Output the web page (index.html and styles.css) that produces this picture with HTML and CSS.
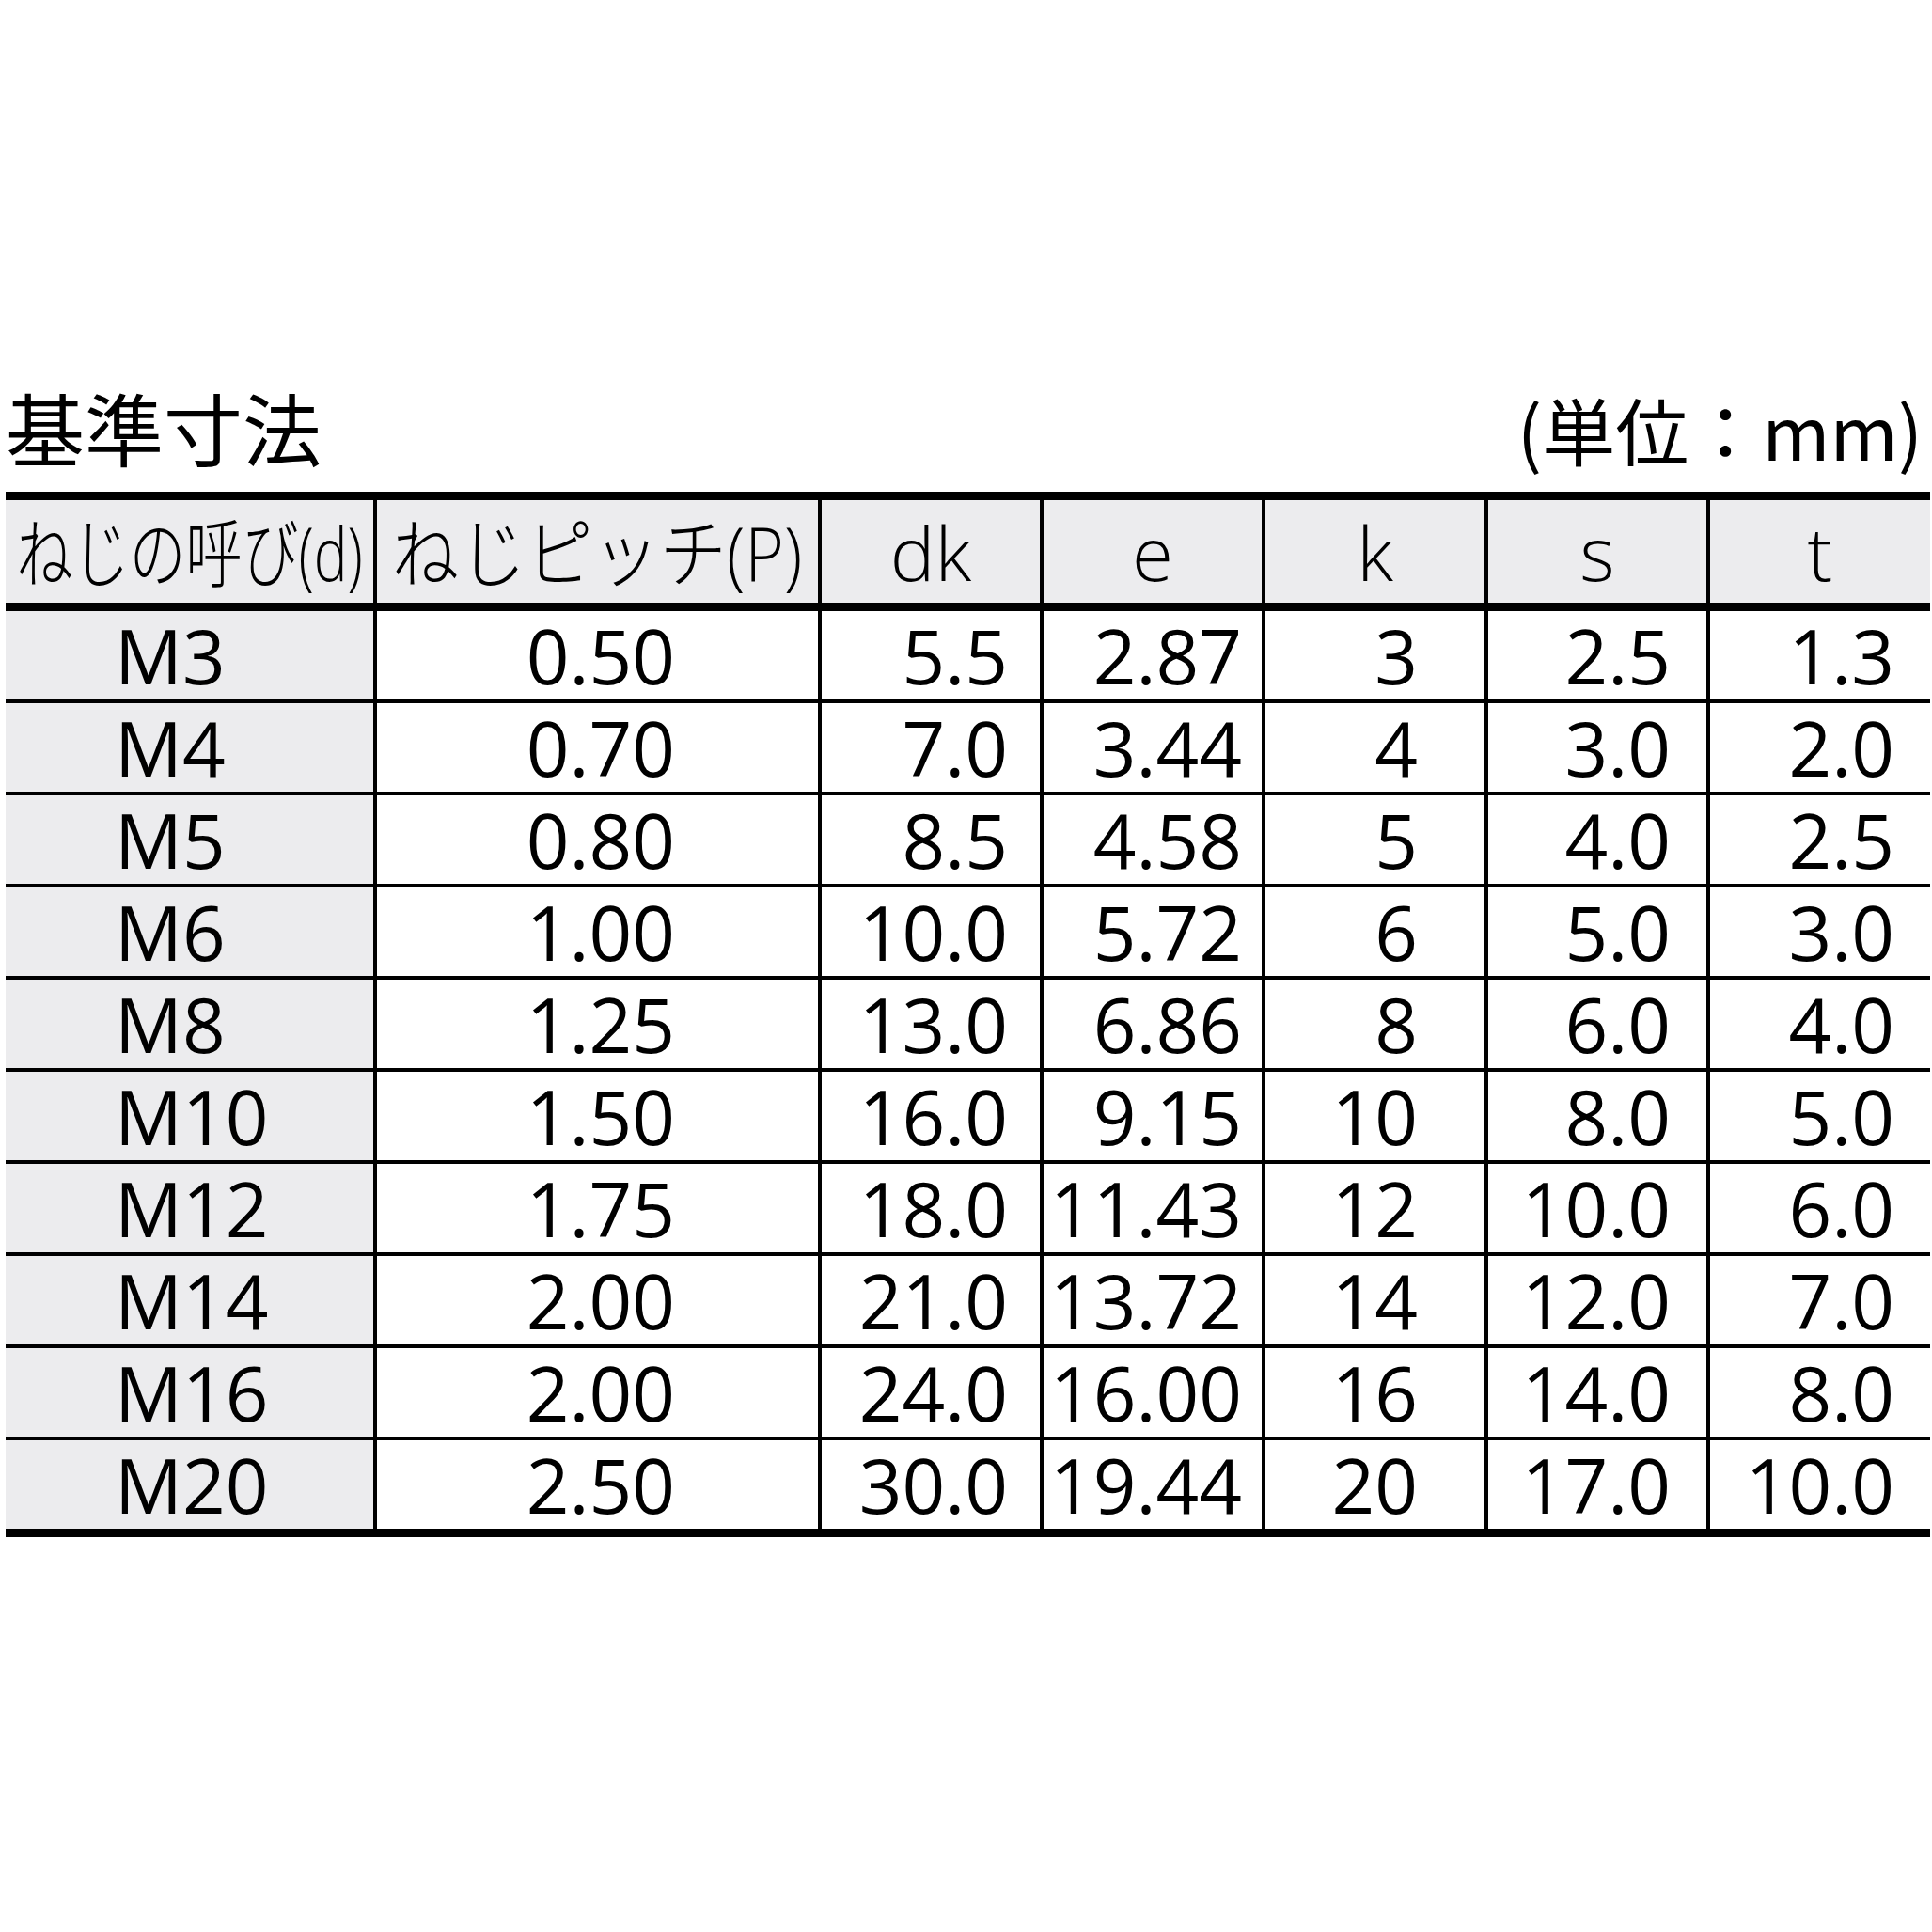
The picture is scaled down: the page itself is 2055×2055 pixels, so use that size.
FILE: index.html
```html
<!DOCTYPE html>
<html lang="ja">
<head>
<meta charset="utf-8">
<title>基準寸法</title>
<link rel="stylesheet" href="styles.css">
</head>
<body>
<div class="page">
  <div class="title-row">
    <h1 class="title">基準寸法</h1>
    <div class="unit">(単位：mm)</div>
  </div>
  <div class="table">
    <div class="row head">
      <div class="cell c1"><span class="squeeze s1">ねじの呼び(d)</span></div>
      <div class="cell c2"><span class="squeeze s2">ねじピッチ(P)</span></div>
      <div class="cell c3">dk</div>
      <div class="cell c4">e</div>
      <div class="cell c5">k</div>
      <div class="cell c6">s</div>
      <div class="cell c7">t</div>
    </div>
    <div class="row"><div class="cell c1">M3</div><div class="cell c2">0.50</div><div class="cell c3">5.5</div><div class="cell c4">2.87</div><div class="cell c5">3</div><div class="cell c6">2.5</div><div class="cell c7">1.3</div></div>
    <div class="row"><div class="cell c1">M4</div><div class="cell c2">0.70</div><div class="cell c3">7.0</div><div class="cell c4">3.44</div><div class="cell c5">4</div><div class="cell c6">3.0</div><div class="cell c7">2.0</div></div>
    <div class="row"><div class="cell c1">M5</div><div class="cell c2">0.80</div><div class="cell c3">8.5</div><div class="cell c4">4.58</div><div class="cell c5">5</div><div class="cell c6">4.0</div><div class="cell c7">2.5</div></div>
    <div class="row"><div class="cell c1">M6</div><div class="cell c2">1.00</div><div class="cell c3">10.0</div><div class="cell c4">5.72</div><div class="cell c5">6</div><div class="cell c6">5.0</div><div class="cell c7">3.0</div></div>
    <div class="row"><div class="cell c1">M8</div><div class="cell c2">1.25</div><div class="cell c3">13.0</div><div class="cell c4">6.86</div><div class="cell c5">8</div><div class="cell c6">6.0</div><div class="cell c7">4.0</div></div>
    <div class="row"><div class="cell c1">M10</div><div class="cell c2">1.50</div><div class="cell c3">16.0</div><div class="cell c4">9.15</div><div class="cell c5">10</div><div class="cell c6">8.0</div><div class="cell c7">5.0</div></div>
    <div class="row"><div class="cell c1">M12</div><div class="cell c2">1.75</div><div class="cell c3">18.0</div><div class="cell c4">11.43</div><div class="cell c5">12</div><div class="cell c6">10.0</div><div class="cell c7">6.0</div></div>
    <div class="row"><div class="cell c1">M14</div><div class="cell c2">2.00</div><div class="cell c3">21.0</div><div class="cell c4">13.72</div><div class="cell c5">14</div><div class="cell c6">12.0</div><div class="cell c7">7.0</div></div>
    <div class="row"><div class="cell c1">M16</div><div class="cell c2">2.00</div><div class="cell c3">24.0</div><div class="cell c4">16.00</div><div class="cell c5">16</div><div class="cell c6">14.0</div><div class="cell c7">8.0</div></div>
    <div class="row last"><div class="cell c1">M20</div><div class="cell c2">2.50</div><div class="cell c3">30.0</div><div class="cell c4">19.44</div><div class="cell c5">20</div><div class="cell c6">17.0</div><div class="cell c7">10.0</div></div>
  </div>
</div>
</body>
</html>
```

FILE: styles.css
```css
html, body {
  margin: 0;
  padding: 0;
  background: #ffffff;
}

body {
  width: 2055px;
  height: 2055px;
  color: #000000;
  font-family: "Open Sans", "Noto Sans CJK JP", sans-serif;
}

.page {
  padding: 412px 2px 0 6px;
}

.title-row {
  display: flex;
  justify-content: space-between;
  align-items: baseline;
  height: 84px;
  margin-bottom: 27px;
}

.title {
  margin: 0;
  font-family: "Noto Sans CJK JP", sans-serif;
  font-weight: 400;
  font-size: 84px;
  line-height: 1;
}

.unit {
  font-family: "Noto Sans CJK JP", sans-serif;
  font-weight: 400;
  font-size: 78px;
  line-height: 1;
  margin-right: 8px;
}

.table {
  width: 2047px;
}

.row {
  display: grid;
  grid-template-columns: 395px 473px 236px 236px 237px 236px 234px;
  height: 98px;
  box-sizing: border-box;
  border-bottom: 4px solid #000;
}

.row.head {
  height: 127px;
  border-top: 9px solid #000;
  border-bottom: 9px solid #000;
  background: #ececee;
}

.row.last {
  height: 103px;
  border-bottom: 9px solid #000;
}

.cell {
  box-sizing: border-box;
  border-right: 4px solid #000;
  font-size: 80px;
  font-weight: 380;
  line-height: 94px;
  white-space: nowrap;
  text-align: right;
}

.cell.c7 {
  border-right: none;
}

.head .cell {
  display: flex;
  justify-content: center;
  font-weight: 300;
  line-height: 109px;
}

.row .c1 {
  background: #ececee;
  text-align: left;
  padding-left: 116px;
}

.head .c1 {
  padding-left: 0;
}

.c2 { padding-right: 152px; }
.c3 { padding-right: 34px; }
.c4 { padding-right: 21px; }
.c5 { padding-right: 71px; }
.c6 { padding-right: 38px; }
.c7 { padding-right: 38px; }

.head .c2, .head .c3, .head .c4, .head .c5, .head .c6, .head .c7 {
  padding-right: 0;
}

.squeeze {
  display: inline-block;
  flex: none;
  font-size: 80px;
}

.squeeze.s1 {
  transform: scaleX(0.75);
}

.squeeze.s2 {
  transform: scaleX(0.89);
}
```
